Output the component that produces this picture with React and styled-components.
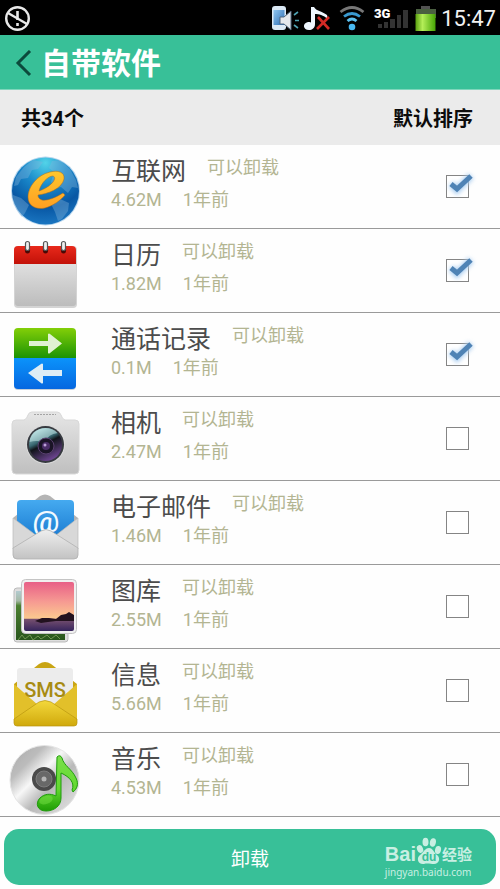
import React, { useState } from "react";
import styled, { createGlobalStyle } from "styled-components";

const GlobalStyle = createGlobalStyle`
  * {
    box-sizing: border-box;
  }
  body {
    margin: 0;
    background: #fefefe;
    font-family: Roboto, "Noto Sans CJK SC", sans-serif;
  }
  button {
    font-family: inherit;
    border: 0;
    padding: 0;
    background: none;
    cursor: pointer;
  }
`;

const StatusBar = styled.div`
  display: flex;
  align-items: center;
  justify-content: space-between;
  height: 35px;
  padding: 2px 4px 0;
  background: #000;
`;

const StatusIcons = styled.div`
  display: flex;
  align-items: center;
`;

const Clock = styled.span`
  margin-left: 4px;
  font-size: 22px;
  line-height: 36px;
  color: #f2f2f2;
`;

const Header = styled.header`
  display: flex;
  align-items: center;
  height: 55px;
  padding: 4px 0 0 13px;
  background: #38c098;
  border-bottom: 1px solid #7fd6bc;
`;

const BackButton = styled.button`
  display: flex;
  width: 28px;
`;

const Title = styled.h1`
  margin: 0;
  font-size: 30px;
  line-height: 40px;
  font-weight: 700;
  color: #fff;
`;

const SortBar = styled.div`
  display: flex;
  align-items: center;
  justify-content: space-between;
  height: 55px;
  padding: 2px 27px 0 21px;
  background: #ebebeb;
  font-size: 20px;
  line-height: 28px;
  font-weight: 700;
  color: #0c0c0c;
`;

const SortButton = styled.button`
  font-size: inherit;
  font-weight: inherit;
  line-height: inherit;
  color: inherit;
`;

const List = styled.ul`
  margin: 0;
  padding: 0;
  list-style: none;
`;

const Row = styled.li`
  display: flex;
  align-items: center;
  height: 84px;
  padding: 0 31px 0 8px;
  border-bottom: 1px solid #9a9a9a;
`;

const AppIcon = styled.svg`
  flex: none;
  width: 74px;
  height: 77px;
  overflow: visible;
`;

const Info = styled.label`
  flex: 1;
  margin-left: 29px;
  height: 66px;
  color: #b3b592;
  font-size: 18px;
`;

const TopLine = styled.div`
  display: flex;
  gap: 21px;
`;

const Name = styled.span`
  font-size: 25px;
  line-height: 36px;
  color: #4c4c4c;
`;

const Tag = styled.span`
  line-height: 28px;
`;

const Meta = styled.div`
  display: flex;
  gap: 21px;
  line-height: 20px;
`;

const CheckWrap = styled.div`
  position: relative;
  width: 23px;
  height: 23px;
`;

const Check = styled.input`
  appearance: none;
  display: block;
  width: 23px;
  height: 23px;
  margin: 0;
  border: 1px solid #858585;
  background: #fff;

  & + svg {
    display: none;
  }
  &:checked + svg {
    display: block;
  }
`;

const Tick = styled.svg`
  position: absolute;
  left: 0;
  top: -4px;
  width: 30px;
  height: 27px;
  overflow: visible;
  pointer-events: none;

  .glow {
    filter: blur(2px);
  }
`;

const Footer = styled.footer`
  position: relative;
  padding: 12px 4px 4px;
`;

const UninstallButton = styled.button`
  display: block;
  width: 100%;
  height: 56px;
  border-radius: 15px;
  background: #38c098;
  color: #fff;
  font-size: 19px;
`;

const Watermark = styled.div`
  position: absolute;
  right: 28px;
  bottom: 10px;
  color: #c9efe3;
  pointer-events: none;
`;

const Brand = styled.div`
  display: flex;
  align-items: flex-end;
  font: 700 20px/22px "Liberation Sans", sans-serif;

  small {
    font: 700 15px/22px "Noto Sans CJK SC", sans-serif;
  }
`;

const Site = styled.div`
  font: 10px/14px "Noto Sans", sans-serif;
`;

function MutedIcon() {
  return (
    <svg width="28" height="28" viewBox="0 0 28 28" fill="none" stroke="#e8e8e8">
      <circle cx="13.5" cy="13.5" r="11.3" strokeWidth="2.4" />
      <path d="M4 8L23 19" strokeWidth="2.4" />
      <path d="M13.5 6v9M13.5 18v3" strokeWidth="2.6" />
    </svg>
  );
}

function StatusGlyphs() {
  return (
    <svg width="168" height="34" viewBox="270 1 168 34">
      <defs>
        <linearGradient id="battery" x2="1">
          <stop offset="0" stopColor="#5aa010" />
          <stop offset=".35" stopColor="#b4ee58" />
          <stop offset="1" stopColor="#46a405" />
        </linearGradient>
        <linearGradient id="phone" y2="1" x2="1">
          <stop offset="0" stopColor="#8fc6f0" />
          <stop offset="1" stopColor="#2c6db4" />
        </linearGradient>
      </defs>
      <rect x="273" y="5" width="14" height="24" rx="3" fill="#dbe9f5" />
      <rect x="274.500" y="9" width="11" height="15" fill="url(#phone)" />
      <path d="M281 16h4l7-6v19l-7-6h-4z" fill="#e4e8ec" stroke="#51677d" />
      <path d="M295 14l4-3M296 19.500h4M295 24l4 3" stroke="#4fa3b4" strokeWidth="1.600" />
      <path d="M312 6h3c2 4 8 4 13 8l1 4c-5-4-9-5-13-5v10c0 4-3 6-6 6-6 0-7-7-1-8 1 0 2 0 3 .5z" fill="#eef7ff" />
      <path d="M319 16l11 12M330 16l-12 12" stroke="#d32a25" strokeWidth="2.600" />
      <g fill="none" strokeWidth="2.800">
        <path d="M341.500 11q11.500-9 23 0" stroke="#777" />
        <path d="M345 15.500q8-6 16 0" stroke="#3a9ad0" />
        <path d="M348.500 20q4.500-4 9 0" stroke="#5cc0ee" />
      </g>
      <circle cx="353" cy="26" r="3.300" fill="#48b9f2" />
      <text x="375" y="17" fontFamily="Roboto, sans-serif" fontWeight="900" fontSize="13" fill="#fff">3G</text>
      <g fill="#333">
        <rect x="379" y="23" width="4" height="4" />
        <rect x="385" y="21" width="4" height="6" />
        <rect x="391" y="18" width="5" height="9" />
        <rect x="398" y="14" width="4" height="13" />
        <rect x="404" y="9" width="5" height="18" />
      </g>
      <path d="M422 5h9v3h6v9h-20V8h5z" fill="#525252" />
      <rect x="416.500" y="13" width="20" height="17" fill="url(#battery)" />
      <rect x="417" y="8" width="19.500" height="5" fill="#4a6040" />
    </svg>
  );
}

function Globe() {
  return (
    <>
      <defs>
        <radialGradient id="sea" cx=".5" cy=".08" r=".95">
          <stop offset="0" stopColor="#52d3e8" />
          <stop offset=".35" stopColor="#1a8acb" />
          <stop offset=".7" stopColor="#0857a4" />
          <stop offset="1" stopColor="#1c79c4" />
        </radialGradient>
        <linearGradient id="gold" x2="0" y2="1">
          <stop offset="0" stopColor="#ffc72e" />
          <stop offset="1" stopColor="#ff9f22" />
        </linearGradient>
      </defs>
      <circle cx="45.500" cy="46" r="34.500" fill="#b7d6ee" />
      <circle cx="45.500" cy="46" r="33.500" fill="url(#sea)" />
      <g fill="#85b6dc" opacity=".38">
        <path d="M16 32l8-10 9-7 10 2-5 7-6 1-4 8-7 1-3 6-4 1z" />
        <path d="M13 50l8 3 8 7-4 8-3 4C16 66 13 58 13 50z" />
        <path d="M52 16l8-1 10 9 6 11 2 8-6-1-4 6-7-6-5 1-5-6 3-10-5-4z" />
        <path d="M51 59l9-5 9 4-1 8-6 8-4 2-3-9z" />
      </g>
      <path
        fillRule="evenodd"
        fill="url(#gold)"
        stroke="#a66b1d"
        strokeWidth=".5"
        d="M38 50C47 49 62 44 64 34C65 27 58 25 50 27C37 30 28 42 28 52C28 61 36 65 45 63C53 61 61 55 65 50L63 48C55 53 47 56 42 55C39 54 38 52 38 50ZM39 46C41 38 48 31 53 31C58 33 51 42 39 46Z"
      />
    </>
  );
}

function Calendar() {
  return (
    <>
      <defs>
        <linearGradient id="paper" x2="0" y2="1">
          <stop offset="0" stopColor="#eee" />
          <stop offset="1" stopColor="#bcbcbc" />
        </linearGradient>
        <linearGradient id="red" x2="0" y2="1">
          <stop offset="0" stopColor="#e8291b" />
          <stop offset="1" stopColor="#c21108" />
        </linearGradient>
      </defs>
      <rect x="14" y="17" width="63" height="62" rx="4" fill="#d4d4d4" />
      <rect x="15" y="17" width="61" height="60" rx="3" fill="url(#paper)" />
      <path d="M14 35V21q0-4 4-4h54q4 0 4 4v14z" fill="url(#red)" />
      {[27, 45, 63].map((x) => (
        <g key={x}>
          <ellipse cx={x + 0.5} cy="21" rx="2.600" ry="3.500" fill="#4a0805" />
          <rect x={x - 1.5} y="12.500" width="4" height="9" rx="2" fill="#eee" stroke="#555" strokeWidth="1.200" />
        </g>
      ))}
    </>
  );
}

function Calls() {
  return (
    <>
      <defs>
        <linearGradient id="green" x2="0" y2="1">
          <stop offset="0" stopColor="#83cf08" />
          <stop offset="1" stopColor="#1b9304" />
        </linearGradient>
        <linearGradient id="blue" x2="0" y2="1">
          <stop offset="0" stopColor="#0b93fb" />
          <stop offset="1" stopColor="#0567e0" />
        </linearGradient>
      </defs>
      <rect x="14" y="17" width="62" height="60" rx="4" fill="#c5cfda" />
      <path d="M14 45V19q0-4 4-4h54q4 0 4 4v26z" fill="url(#green)" />
      <path d="M14 45v27q0 4 4 4h54q4 0 4-4V45z" fill="url(#blue)" />
      <path d="M29 28h19v-7q1-1 2 0l12 9.500L50 40q-1 1-2 0v-7H29z" fill="#e0f2d2" />
      <path d="M62 57H43v-6q-1-1-2 0L28 60l13 10q1 1 2 0v-7h19z" fill="#deedf5" />
    </>
  );
}

function Camera() {
  return (
    <>
      <defs>
        <linearGradient id="body" x2="0" y2="1">
          <stop offset="0" stopColor="#e6e6e6" />
          <stop offset="1" stopColor="#bfbfbf" />
        </linearGradient>
        <linearGradient id="lens" x1=".2" y1="0" x2=".7" y2="1">
          <stop offset="0" stopColor="#b9e4e6" />
          <stop offset=".38" stopColor="#37666f" />
          <stop offset=".5" stopColor="#101319" />
          <stop offset="1" stopColor="#76499c" />
        </linearGradient>
      </defs>
      <path
        d="M16 23h8q3-1 4-5 1-3 4-3h25q3 0 4 3 1 4 4 5h10q4 0 4 4v46q0 4-4 4H16q-4 0-4-4V27q0-4 4-4z"
        fill="url(#body)"
        stroke="#d8d8d8"
      />
      <path d="M34 17.500h22" stroke="#a4a4a4" strokeDasharray="2 1" />
      <circle cx="45.500" cy="47.500" r="19.500" fill="#dadada" />
      <circle cx="45.500" cy="47.500" r="18.500" fill="#373a40" />
      <circle cx="45.500" cy="47.500" r="16.500" fill="url(#lens)" />
      <path d="M29.500 45q1-13 16-14 8 0 12 5-9 1-13 9-8-2-15 0z" fill="#d2f4f4" opacity=".5" />
      <circle cx="46" cy="49" r="8" fill="#1a1426" stroke="#59406f" />
      <circle cx="46" cy="49" r="4" fill="#4b2d68" />
      <circle cx="45" cy="48" r="1.500" fill="#bda0d8" />
    </>
  );
}

function Mail() {
  return (
    <>
      <defs>
        <linearGradient id="letter" x2="0" y2="1">
          <stop offset="0" stopColor="#45aaf0" />
          <stop offset="1" stopColor="#1778cf" />
        </linearGradient>
        <linearGradient id="silver" x2="0" y2="1">
          <stop offset="0" stopColor="#efefef" />
          <stop offset="1" stopColor="#c3c3c3" />
        </linearGradient>
      </defs>
      <path d="M13 37L40 15q5-3 10 0l28 22v10H13z" fill="#b4b4b4" />
      <path d="M17 60V23q0-4 4-4h49q4 0 4 4v37z" fill="url(#letter)" />
      <text x="46" y="51" textAnchor="middle" fontFamily="Roboto, sans-serif" fontSize="30" fontWeight="500" fill="#f2faff">@</text>
      <path d="M13 37l24 18L13 68zM78 37L55 55l23 13z" fill="#d8d8d8" stroke="#bababa" strokeWidth=".7" />
      <path d="M13 67l28-17q5-3 10 0l27 17v7q0 4-4 4H17q-4 0-4-4z" fill="url(#silver)" stroke="#b0b0b0" strokeWidth=".8" />
    </>
  );
}

function Gallery() {
  return (
    <>
      <defs>
        <linearGradient id="sunset" x2="0" y2="1">
          <stop offset="0" stopColor="#e85f87" />
          <stop offset=".4" stopColor="#f69a92" />
          <stop offset=".74" stopColor="#fbc98f" />
          <stop offset=".76" stopColor="#77506f" />
          <stop offset="1" stopColor="#35245c" />
        </linearGradient>
        <linearGradient id="grass" x2="0" y2="1">
          <stop offset="0" stopColor="#b3cbd0" />
          <stop offset=".2" stopColor="#a5b9a5" />
          <stop offset=".3" stopColor="#4c8030" />
          <stop offset="1" stopColor="#28551c" />
        </linearGradient>
      </defs>
      <rect x="14" y="23" width="54" height="54" rx="3" fill="#dedede" stroke="#bbb" />
      <rect x="16" y="26" width="49" height="49" fill="url(#grass)" />
      <path d="M18 75l4-5 3 4 5-4 3 5 5-4 3 3 6-4 4 4 5-4 4 4" stroke="#6f9650" fill="none" />
      <rect x="21.500" y="14.500" width="55" height="54" rx="4" fill="#f0f0f0" stroke="#c4c4c4" />
      <rect x="24" y="17" width="50" height="49" rx="2" fill="url(#sunset)" />
      <path d="M35 56l7-3h7l7 1 5-4 5-1 3-2 5 3v6H56l-8 1-7 1z" fill="#22121f" />
    </>
  );
}

function Sms() {
  return (
    <>
      <defs>
        <linearGradient id="yellow" x2="0" y2="1">
          <stop offset="0" stopColor="#f3d83c" />
          <stop offset="1" stopColor="#d0a90c" />
        </linearGradient>
      </defs>
      <path d="M14 35l25-20q6-4 12 0l26 20v10H14z" fill="#c9a514" />
      <path d="M17 58V22q0-3 3-3h50q3 0 3 3v36z" fill="#ececec" />
      <path d="M14 35l24 21-24 16zM77 35L53 56l24 16z" fill="#e2c02a" />
      <path d="M14 70l25-17q6-3 12 0l26 17v4q0 3-3 3H17q-3 0-3-3z" fill="url(#yellow)" stroke="#b9960e" strokeWidth=".7" />
      <text x="45" y="48" textAnchor="middle" fontFamily="Roboto, sans-serif" fontSize="20" fontWeight="500" fill="#a78b12">SMS</text>
    </>
  );
}

function Music() {
  return (
    <>
      <defs>
        <linearGradient id="disc" x2="1" y2="1">
          <stop offset="0" stopColor="#a8a8a8" />
          <stop offset=".25" stopColor="#bcbcbc" />
          <stop offset=".42" stopColor="#f7f7f7" />
          <stop offset=".6" stopColor="#b9b9b9" />
          <stop offset="1" stopColor="#e9e9e9" />
        </linearGradient>
        <linearGradient id="note" x2="0" y2="1">
          <stop offset="0" stopColor="#7be04b" />
          <stop offset=".6" stopColor="#62d82f" />
          <stop offset="1" stopColor="#1e9d05" />
        </linearGradient>
      </defs>
      <circle cx="44.500" cy="47" r="34.500" fill="url(#disc)" stroke="#e4e4e4" />
      <circle cx="44" cy="46" r="12" fill="#4a4a4a" />
      <circle cx="44" cy="46" r="8" fill="#686868" stroke="#7d7d7d" />
      <circle cx="44" cy="46" r="2.500" fill="#b5b5b5" />
      <path
        d="M57 24q3-3 5 1c2 8 10 11 14 20 3 6 1 11-3 14l-1-2c3-7-2-13-11-17v25c0 8-7 13-15 13-9 0-11-8-6-13 4-4 10-5 16-2z"
        fill="url(#note)"
        stroke="#1f9c0c"
      />
      <ellipse cx="46" cy="67" rx="7" ry="4" fill="#8cf05a" opacity=".35" transform="rotate(-18 46 67)" />
    </>
  );
}

function Paw() {
  return (
    <svg width="26" height="28" viewBox="0 0 26 28" fill="currentColor">
      <ellipse cx="4" cy="12" rx="3" ry="4" transform="rotate(-20 4 12)" />
      <ellipse cx="9.500" cy="5" rx="3" ry="4.300" />
      <ellipse cx="17" cy="5.500" rx="3" ry="4.300" transform="rotate(12 17 5)" />
      <ellipse cx="22" cy="13" rx="3" ry="4" transform="rotate(12 22 13)" />
      <path d="M13 11c4 0 5 5 8 7 4 3 2 9-3 9-3 0-7-1-10 0-6 1-8-6-4-9 3-2 5-7 9-7z" />
      <text x="13" y="24" textAnchor="middle" fontFamily="Liberation Sans, sans-serif" fontWeight="700" fontSize="12" fill="#38c098">du</text>
    </svg>
  );
}

const apps = [
  { id: "browser", name: "互联网", size: "4.62M", icon: <Globe /> },
  { id: "calendar", name: "日历", size: "1.82M", icon: <Calendar /> },
  { id: "calls", name: "通话记录", size: "0.1M", icon: <Calls /> },
  { id: "camera", name: "相机", size: "2.47M", icon: <Camera /> },
  { id: "mail", name: "电子邮件", size: "1.46M", icon: <Mail /> },
  { id: "gallery", name: "图库", size: "2.55M", icon: <Gallery /> },
  { id: "sms", name: "信息", size: "5.66M", icon: <Sms /> },
  { id: "music", name: "音乐", size: "4.53M", icon: <Music /> },
];

export default function App() {
  const [selected, setSelected] = useState(["browser", "calendar", "calls"]);

  const toggle = (id) => {
    setSelected(
      selected.includes(id) ? selected.filter((s) => s !== id) : [...selected, id]
    );
  };

  return (
    <>
      <GlobalStyle />
      <StatusBar>
        <MutedIcon />
        <StatusIcons>
          <StatusGlyphs />
          <Clock>15:47</Clock>
        </StatusIcons>
      </StatusBar>
      <Header>
        <BackButton type="button" aria-label="返回">
          <svg width="20" height="28" viewBox="0 0 20 28" fill="none" stroke="#0c4a3c" strokeWidth="3">
            <path d="M17 1L5 13l12 12" />
          </svg>
        </BackButton>
        <Title>自带软件</Title>
      </Header>
      <SortBar>
        <span>共34个</span>
        <SortButton type="button">默认排序</SortButton>
      </SortBar>
      <List>
        {apps.map((app) => (
          <Row key={app.id}>
            <AppIcon viewBox="8 3 74 77">{app.icon}</AppIcon>
            <Info htmlFor={app.id}>
              <TopLine>
                <Name>{app.name}</Name>
                <Tag>可以卸载</Tag>
              </TopLine>
              <Meta>
                <span>{app.size}</span>
                <span>1年前</span>
              </Meta>
            </Info>
            <CheckWrap>
              <Check
                type="checkbox"
                id={app.id}
                checked={selected.includes(app.id)}
                onChange={() => toggle(app.id)}
              />
              <Tick viewBox="0 0 30 27" fill="none">
                <path className="glow" d="M5 13l6 6L25 5" stroke="#a9cdf0" strokeWidth="7" />
                <path d="M5 13l6 5L25 5" stroke="#4f83b5" strokeWidth="5" />
              </Tick>
            </CheckWrap>
          </Row>
        ))}
      </List>
      <Footer>
        <UninstallButton type="button">卸载</UninstallButton>
        <Watermark>
          <Brand>
            Bai
            <Paw />
            <small>经验</small>
          </Brand>
          <Site>jingyan.baidu.com</Site>
        </Watermark>
      </Footer>
    </>
  );
}
